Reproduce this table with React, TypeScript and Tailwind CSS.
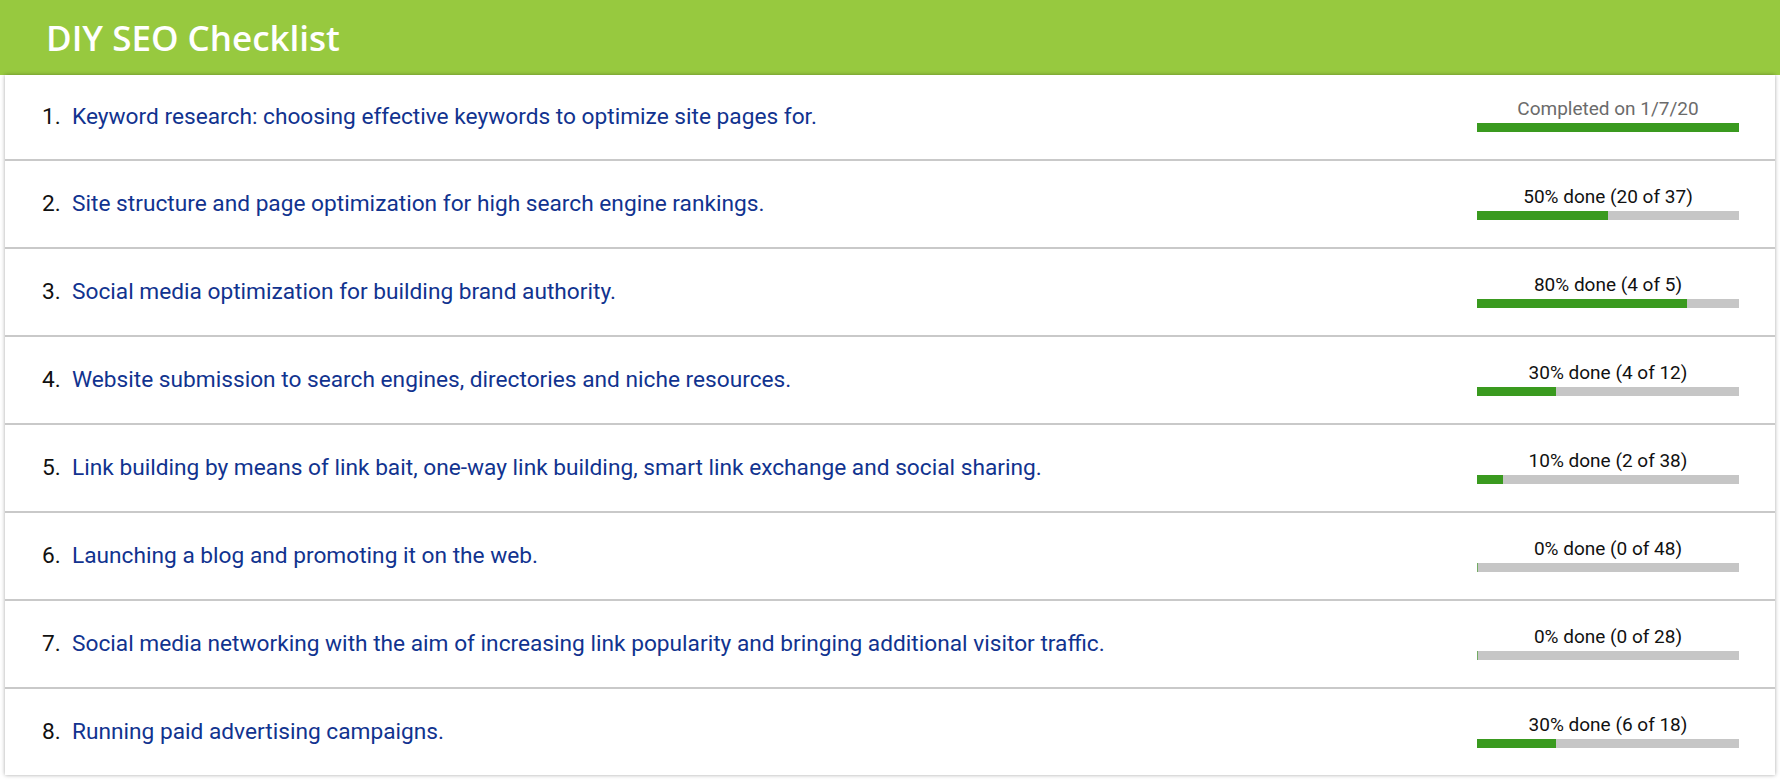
import React from "react";

type Item = { n: number; text: string; label: string; pct: number; completed?: boolean };

const items: Item[] = [
  { n: 1, text: "Keyword research: choosing effective keywords to optimize site pages for.", label: "Completed on 1/7/20", pct: 100, completed: true },
  { n: 2, text: "Site structure and page optimization for high search engine rankings.", label: "50% done (20 of 37)", pct: 50 },
  { n: 3, text: "Social media optimization for building brand authority.", label: "80% done (4 of 5)", pct: 80 },
  { n: 4, text: "Website submission to search engines, directories and niche resources.", label: "30% done (4 of 12)", pct: 30 },
  { n: 5, text: "Link building by means of link bait, one-way link building, smart link exchange and social sharing.", label: "10% done (2 of 38)", pct: 10 },
  { n: 6, text: "Launching a blog and promoting it on the web.", label: "0% done (0 of 48)", pct: 0 },
  { n: 7, text: "Social media networking with the aim of increasing link popularity and bringing additional visitor traffic.", label: "0% done (0 of 28)", pct: 0 },
  { n: 8, text: "Running paid advertising campaigns.", label: "30% done (6 of 18)", pct: 30 },
];

export default function App() {
  return (
    <div className="w-[1780px] h-[782px] bg-white overflow-hidden" style={{ fontFamily: "Roboto, 'Liberation Sans', sans-serif" }}>
      <div className="h-[75px] bg-[#97c93f] flex items-center pl-[46px]">
        <h1 className="text-white text-[35px] font-semibold leading-none" style={{ fontFamily: "'Open Sans', 'Liberation Sans', sans-serif" }}>
          DIY SEO Checklist
        </h1>
      </div>
      <div className="mx-[5px] bg-white shadow-[0_0_4px_rgba(0,0,0,0.35)]">
        {items.map((it, i) => (
          <div
            key={it.n}
            className={
              i === 0
                ? "h-[84px] flex items-center"
                : "h-[88px] flex items-center border-t-2 border-[#c9c9c9]"
            }
          >
            <div className="flex-1 flex items-baseline pl-[37px] text-[22.7px]">
              <span className="text-[#111] w-[30px]">{it.n}.</span>
              <span className="text-[#11338f]">{it.text}</span>
            </div>
            <div className={i === 0 ? "w-[262px] mr-[36px] flex flex-col items-center pb-[4px]" : "w-[262px] mr-[36px] flex flex-col items-center pb-[2px]"}>
              <div className={it.completed ? "text-[19px] leading-[22px] text-[#6b6b6b]" : "text-[19px] leading-[22px] text-[#111]"}>
                {it.label}
              </div>
              <div className="w-full h-[9px] bg-[#c6c6c6] mt-[3px] flex">
                <div className="h-full bg-[#3a9a1f]" style={{ width: it.pct === 0 ? "1px" : `${it.pct}%`, opacity: it.pct === 0 ? 0.6 : 1 }} />
              </div>
            </div>
          </div>
        ))}
      </div>
    </div>
  );
}
